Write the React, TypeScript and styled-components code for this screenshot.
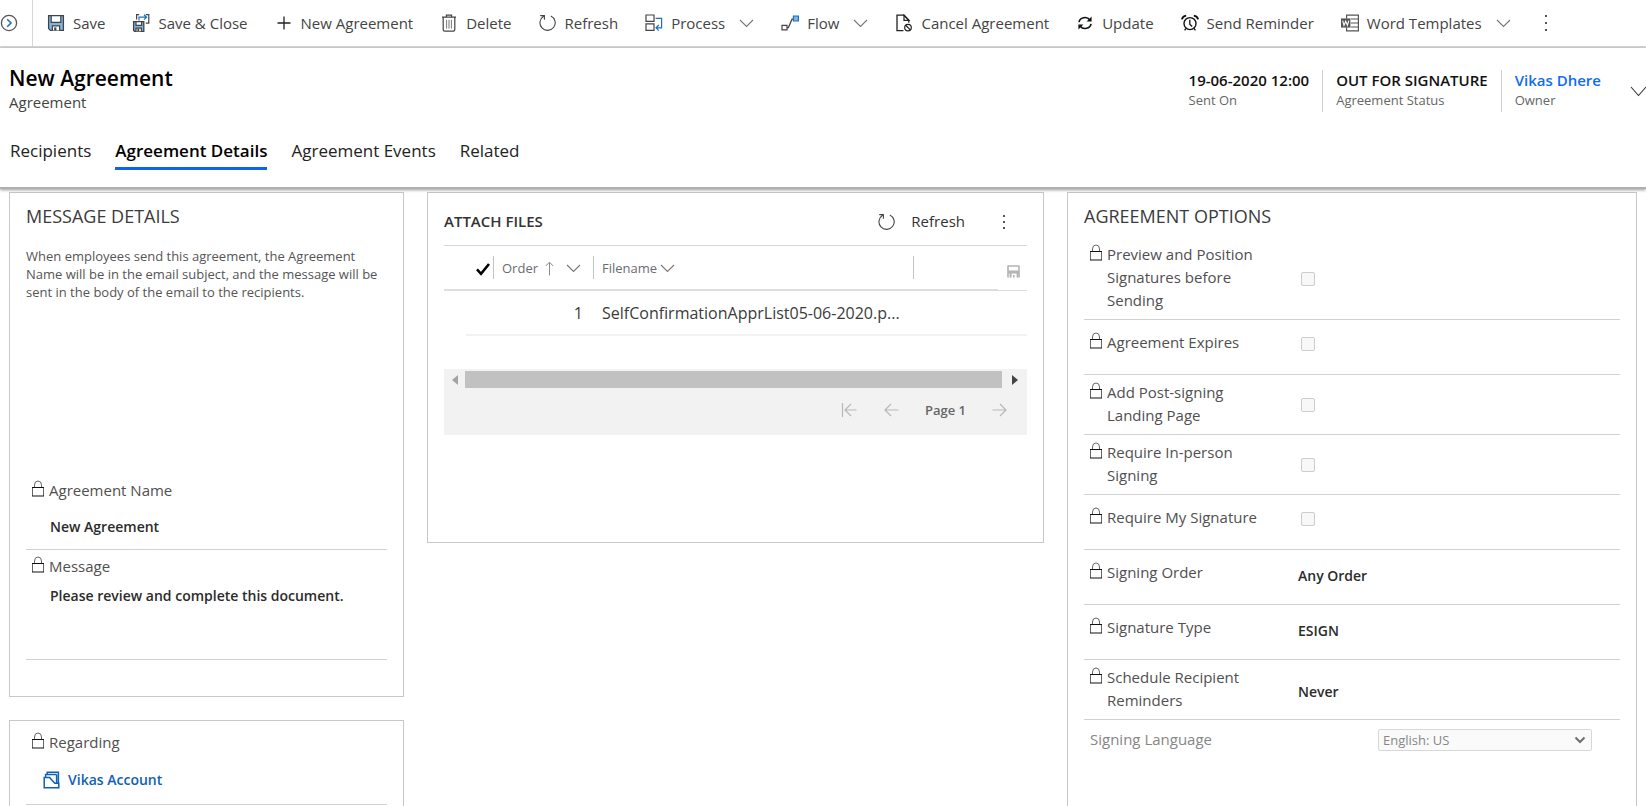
import React from "react";
import styled, { createGlobalStyle, css } from "styled-components";

const GlobalStyle = createGlobalStyle`
  *, *::before, *::after { box-sizing: border-box; }
  body {
    margin: 0;
    background: #fff;
    color: #333;
    font-family: "Segoe UI", "Open Sans", "Noto Sans", sans-serif;
    font-size: 15px;
    line-height: 23px;
  }
  button, input, textarea, select { font: inherit; color: inherit; }
  h1, h2, p, dl, dd { margin: 0; font-weight: 400; }
`;

const Shell = styled.div`
  display: flex;
  flex-direction: column;
  height: 100vh;
  overflow: hidden;
`;

/* ---------- command bar ---------- */

const CommandBar = styled.nav`
  display: flex;
  flex: none;
  align-items: stretch;
  height: 48px;
  border-bottom: 2px solid #d6d6d6;
`;

const BackButton = styled.button`
  display: flex;
  align-items: center;
  width: 33px;
  padding: 0;
  border: 0;
  border-right: 1px solid #d6d6d6;
  background: none;
`;

const Commands = styled.div`
  display: flex;
  align-items: center;
`;

const Command = styled.button`
  display: flex;
  align-items: center;
  gap: 8px;
  height: 46px;
  padding: 0 13px 0 14px;
  border: 0;
  background: none;
  color: #444;
  white-space: nowrap;
  cursor: pointer;
`;

const MenuChevron = styled.span`
  display: flex;
  padding-left: 6px;
`;

/* ---------- record header ---------- */

const RecordHeader = styled.header`
  position: relative;
  z-index: 1;
  flex: none;
  padding: 16px 0 17px 9px;
  border-bottom: 2px solid #b0b0b0;
  background: #fff;
  box-shadow: 0 1px 3px rgba(0, 0, 0, 0.4);
`;

const TitleRow = styled.div`
  display: flex;
  justify-content: space-between;
`;

const Title = styled.h1`
  color: #000;
  font-size: 21px;
  font-weight: 600;
  line-height: 28px;
`;

const Subtitle = styled.p`
  color: #444;
  line-height: 20px;
`;

const Summary = styled.div`
  display: flex;
  align-items: center;
  padding-top: 6px;
`;

const SummaryFields = styled.dl`
  display: flex;
`;

const SummaryField = styled.div`
  display: flex;
  flex-direction: column-reverse;
  justify-content: flex-end;
  height: 42px;
  padding: 0 13px;
  border-left: 1px solid #d0d0d0;
  white-space: nowrap;

  &:first-child { border-left: 0; }

  dt { color: #666; font-size: 13px; line-height: 20px; }
  dd { color: #111; font-size: 15px; font-weight: 600; line-height: 20px; }
`;

const OwnerLink = styled.a`
  color: #0f6cf5;
  text-decoration: none;
`;

const ExpandButton = styled.button`
  display: flex;
  width: 32px;
  padding: 0 0 0 16px;
  border: 0;
  background: none;
  overflow: hidden;
`;

const Tabs = styled.div`
  display: flex;
  gap: 24px;
  padding: 27px 0 0 1px;
`;

const Tab = styled.button<{ $active?: boolean }>`
  padding: 0 0 4px;
  border: 0;
  border-bottom: 3px solid ${(p) => (p.$active ? "#0a66f0" : "transparent")};
  background: none;
  color: ${(p) => (p.$active ? "#000" : "#222")};
  font-size: 17px;
  font-weight: ${(p) => (p.$active ? 600 : 400)};
  line-height: 24px;
  cursor: pointer;
`;

/* ---------- form body ---------- */

const FormBody = styled.main`
  display: grid;
  flex: 1;
  grid-template-columns: 395fr 617fr 570fr;
  gap: 23px;
  align-items: start;
  min-height: 0;
  padding: 3px 9px 0;
  overflow-y: auto;
  scrollbar-width: none;
`;

const Column = styled.div`
  display: flex;
  flex-direction: column;
  gap: 23px;
  min-width: 0;
`;

const Card = styled.section<{ $bottom?: number }>`
  padding: 0 16px ${(p) => p.$bottom ?? 0}px;
  border: 1px solid #c8c8c8;
  background: #fff;
`;

const SectionTitle = styled.h2`
  padding-top: 11px;
  color: #3b3b3b;
  font-size: 18px;
  line-height: 24px;
`;

const HelpText = styled.p`
  min-height: 232px;
  padding-top: 19px;
  color: #555;
  font-size: 13px;
  line-height: 18px;
`;

const StackedField = styled.div<{ $top: number; $gap: number; $bottom: number }>`
  display: flex;
  flex-direction: column;
  gap: ${(p) => p.$gap}px;
  padding: ${(p) => `${p.$top}px 0 ${p.$bottom}px 5px`};
  border-bottom: 1px solid #d2d2d2;
`;

const FieldLabel = styled.label`
  display: flex;
  align-items: flex-start;
  gap: 4px;
  color: #505050;

  svg { margin-top: 1px; }
`;

const plainBox = css`
  display: block;
  width: 100%;
  padding: 0;
  border: 0;
  outline: 0;
  background: none;
  color: #2b2b2b;
  font-size: 14px;
  font-weight: 600;
  line-height: 23px;
`;

const TextValue = styled.input`
  ${plainBox}
  height: 23px;
`;

const StackedInput = styled(TextValue)`
  padding-left: 19px;
`;

const StackedTextArea = styled.textarea`
  ${plainBox}
  height: 64px;
  padding-left: 19px;
  resize: none;
`;

const RecordLink = styled.a`
  display: flex;
  align-items: center;
  gap: 8px;
  padding-left: 12px;
  color: #1160b7;
  font-size: 14px;
  font-weight: 600;
  text-decoration: none;
`;

/* ---------- attached files grid ---------- */

const GridToolbar = styled.div`
  display: flex;
  align-items: center;
  height: 53px;
  padding-top: 5px;
  border-bottom: 1px solid #d6d6d6;
`;

const GridTitle = styled.h2`
  flex: 1;
  color: #333;
  font-size: 15px;
  font-weight: 600;
`;

const GridButton = styled.button`
  display: flex;
  align-items: center;
  gap: 15px;
  padding: 0;
  border: 0;
  background: none;
`;

const MoreButton = styled(GridButton)`
  justify-content: center;
  width: 47px;
  margin-left: 15px;
`;

const FileTable = styled.table`
  width: 100%;
  margin-bottom: 33px;
  border-spacing: 0;
  table-layout: fixed;

  th, td { padding: 0; text-align: left; font-weight: 400; }
  th { height: 45px; border-bottom: 2px solid #dedede; }
  th:last-child { border-bottom: 1px solid #dedede; }
  td { height: 45px; border-bottom: 2px solid #f2f2f2; }
  td:first-child { border-bottom: 0; }
`;

const SizedCol = styled.col<{ $width: number }>`
  width: ${(p) => p.$width}px;
`;

const HeadCell = styled.div<{ $divided?: boolean }>`
  display: flex;
  align-items: center;
  height: 23px;
  padding-top: 2px;
  padding-left: ${(p) => (p.$divided ? 8 : 10)}px;
  border-left: ${(p) => (p.$divided ? "1px solid #c4c4c4" : "0")};
  color: #6b6b72;
  font-size: 13px;
  white-space: nowrap;
`;

const SortMark = styled.span`
  display: flex;
  padding: 0 11px 0 6px;
`;

const SaveMark = styled.span`
  display: flex;
  padding: 6px 0 0 9px;
`;

const CellText = styled.div<{ $right?: boolean }>`
  padding: 2px 10px 0 9px;
  color: #3b3b3b;
  font-size: 16px;
  text-align: ${(p) => (p.$right ? "right" : "left")};
  white-space: nowrap;
`;

const GridFooter = styled.div`
  height: 66px;
  background: #f2f2f2;
`;

const ScrollTrack = styled.div`
  display: flex;
  align-items: center;
  padding-top: 2px;
`;

const ScrollArrow = styled.button<{ $wide?: boolean }>`
  display: flex;
  justify-content: center;
  width: ${(p) => (p.$wide ? 25 : 21)}px;
  padding: 0;
  border: 0;
  background: none;
`;

const ScrollThumb = styled.div`
  flex: 1;
  height: 17px;
  background: #c1c1c1;
`;

const Pager = styled.div`
  display: flex;
  align-items: center;
  justify-content: flex-end;
  gap: 26px;
  height: 44px;
  padding-right: 19px;
  color: #666;
  font-size: 13px;
  font-weight: 600;
`;

const PagerButton = styled.button`
  display: flex;
  padding: 0;
  border: 0;
  background: none;
`;

/* ---------- option rows ---------- */

const OptionList = styled.div`
  padding-top: 9px;
`;

const OptionRow = styled.div<{ $tall?: boolean }>`
  display: grid;
  grid-template-columns: 186px 1fr;
  column-gap: 28px;
  align-items: center;
  padding: ${(p) => (p.$tall ? "6px 0 7px" : "11px 0 20px")};
  border-bottom: 1px solid #d2d2d2;
`;

const OptionLabel = styled(FieldLabel)`
  padding-left: 5px;
`;

const CheckBox = styled.input`
  appearance: none;
  width: 14px;
  height: 14px;
  margin: 2px 0 0 3px;
  border: 1px solid #cdcdcd;
  border-radius: 2px;
  background: #f8f8f8;
`;

const OptionValue = styled(TextValue)`
  margin-top: 5px;
`;

const ValueSlot = styled.div`
  display: flex;
  align-items: center;
  height: 23px;
`;

const LanguageRow = styled.div`
  display: grid;
  grid-template-columns: 288px 1fr;
  align-items: center;
  padding: 8px 28px 0 6px;
  color: #868686;
`;

const SelectBox = styled.div`
  position: relative;
  display: flex;
  height: 22px;

  svg { position: absolute; top: 7px; right: 6px; pointer-events: none; }
`;

const Select = styled.select`
  appearance: none;
  width: 100%;
  padding: 0 4px;
  border: 1px solid #d8d8d8;
  border-radius: 2px;
  background: #fafafa;
  color: #868686;
  font-size: 13px;
  line-height: 20px;
  opacity: 1;
`;

/* ---------- icons ---------- */

const IconSvg = styled.svg`
  flex: none;
`;

type IconProps = { children: React.ReactNode; w?: number; h?: number; color?: string };

const Icon = ({ children, w = 18, h = 18, color = "#444" }: IconProps) => (
  <IconSvg width={w} height={h} viewBox={`0 0 ${w} ${h}`} fill="none" stroke={color} strokeWidth="1.2" aria-hidden="true">
    {children}
  </IconSvg>
);

const Lock = () => (
  <Icon w={14} h={17}>
    <path d="M3.5 7.5V5a3.5 4 0 0 1 7 0v2.500M1.500 7v9M12.500 7v9" stroke="#666" strokeWidth="1" />
    <path d="M1 7.500h12M1 16h12" stroke="#111" />
  </Icon>
);

const Chevron = ({ color = "#777", w = 15, h = 9 }: { color?: string; w?: number; h?: number }) => (
  <Icon w={w} h={h} color={color}>
    <path d={`M1 1l${w / 2 - 1} ${h - 2.5}L${w - 1} 1`} strokeWidth="1.1" />
  </Icon>
);

const Refresh = () => (
  <Icon>
    <path d="M11.8 1.9a7.6 7.6 0 1 1-7.2.4M1.200 1.600h4.200v4.200" strokeWidth="1.1" />
  </Icon>
);

const Dots = ({ gap = 6 }: { gap?: number }) => (
  <Icon w={4}>
    {[-gap, 0, gap].map((d) => (
      <rect key={d} x="1" y={8 + d} width="2" height="2" fill="#555" stroke="none" />
    ))}
  </Icon>
);

const icons = {
  back: (
    <Icon>
      <circle cx="9" cy="9" r="7.6" stroke="#555" strokeWidth="1.3" />
      <path d="M7.2 5.2L11 9l-3.8 3.8" stroke="#1d6fc0" strokeWidth="1.6" />
    </Icon>
  ),
  save: (
    <Icon>
      <path d="M1.6 1.6h14.8v14.8H3.4l-1.8-1.8z" fill="#7eb6e4" strokeWidth="1.3" />
      <path d="M4.2 1.6h9.6v6.8H4.2z" fill="#fff" />
      <path d="M5.4 16.4v-4.6h7.2v4.6" fill="#fff" />
      <path d="M7.2 13.4h2.2v3H7.2z" fill="#444" stroke="none" />
    </Icon>
  ),
  saveClose: (
    <Icon>
      <path d="M1.6 7.6h10.2v9.8H2.6l-1-1z" fill="#7eb6e4" strokeWidth="1.3" />
      <path d="M4 7.6h5.6v3.8H4z" fill="#fff" />
      <path d="M4 17.2v-3h5.4v3" fill="#fff" />
      <path d="M5.4 15h1.8v2H5.4z" fill="#444" stroke="none" />
      <path d="M4.6 5.6v-5h2.6M13.8.6h3v8.6h-3" />
      <path d="M7 6.4V3.2h7.4M12 .8l2.6 2.4L12 5.6" stroke="#1d6fc0" />
    </Icon>
  ),
  add: (
    <Icon color="#222">
      <path d="M9 2.5v13M2.5 9h13" strokeWidth="1.3" />
    </Icon>
  ),
  remove: (
    <Icon>
      <path d="M2 3.2h14M6.4 3V1.2h5.2V3M3.2 3.4v12.2q0 1.6 1.6 1.6h8.4q1.6 0 1.6-1.6V3.4" />
      <path d="M6.6 5.8v8.8M9 5.8v8.8M11.4 5.8v8.8" strokeWidth="1" stroke="#777" />
    </Icon>
  ),
  process: (
    <Icon>
      <path d="M1 1h8v6.4H1zM1 9.8h8v6.6H1z" />
      <path d="M10.6 4.4h6v9.4h-5M13.8 11L11 13.8l2.8 2.8" stroke="#1d6fc0" />
    </Icon>
  ),
  flow: (
    <Icon>
      <path d="M1 11.4h5v4.4H1zM6 13.6h1.4l3.6-8.4h1" />
      <path d="M12.4 2h5v5h-5z" fill="#7eb6e4" stroke="#1d6fc0" />
    </Icon>
  ),
  cancel: (
    <Icon color="#222">
      <path d="M8.4 16.6H2V1.2h7l4.8 5v2.6" strokeWidth="1.3" />
      <path d="M9 1.2v5.2h5z" />
      <circle cx="13" cy="13.6" r="3.3" />
      <path d="M10.7 11.3l4.6 4.6" strokeWidth="1.3" />
    </Icon>
  ),
  update: (
    <Icon color="#111">
      <path d="M3 8.2a6 5.4 0 0 1 10.8-2.4M15 9.8a6 5.4 0 0 1-10.8 2.4" strokeWidth="1.6" />
      <path d="M15.6 2.6v5h-5zM2.4 15.4v-5h5z" fill="#111" stroke="none" />
    </Icon>
  ),
  reminder: (
    <Icon color="#111">
      <circle cx="9" cy="9.6" r="6" strokeWidth="1.4" />
      <path d="M8.8 5.8v4.4l2.4 2.2M5 14.4l-1.4 2M13 14.4l1.4 2" strokeWidth="1.3" />
      <path d="M.9 5.4C1.4 3 3 1.8 5.2 1.6M17.1 5.4C16.6 3 15 1.8 12.8 1.6" strokeWidth="1.9" />
    </Icon>
  ),
  word: (
    <Icon color="#555">
      <path d="M5.6 4.6V1.2h11.8v15.6H5.6v-3.2M9.8 5h7.6M9.8 9h7.6M9.8 13h7.6" />
      <path d="M0 4.4h9.4v9.2H0z" fill="#555" stroke="none" />
      <path d="M1.6 6.6L3 11.4l1.7-4.2 1.7 4.2 1.4-4.8" stroke="#fff" strokeWidth="1.1" />
    </Icon>
  ),
  record: (
    <Icon w={17} color="#1160b7">
      <path d="M1.2 6.4v10.4h14.6v-4.6h-4L6.6 6.4zM2.6 6V3.6h11M4.2 3.4V1.2h11.2v10.6M13.6 3.6v8.2" strokeWidth="1.5" />
    </Icon>
  ),
};

type CommandDef = { icon: React.ReactNode; label: string; menu?: boolean };

const commands: CommandDef[] = [
  { icon: icons.save, label: "Save" },
  { icon: icons.saveClose, label: "Save & Close" },
  { icon: icons.add, label: "New Agreement" },
  { icon: icons.remove, label: "Delete" },
  { icon: <Refresh />, label: "Refresh" },
  { icon: icons.process, label: "Process", menu: true },
  { icon: icons.flow, label: "Flow", menu: true },
  { icon: icons.cancel, label: "Cancel Agreement" },
  { icon: icons.update, label: "Update" },
  { icon: icons.reminder, label: "Send Reminder" },
  { icon: icons.word, label: "Word Templates", menu: true },
];

const tabs = ["Recipients", "Agreement Details", "Agreement Events", "Related"];

type Option = { id: string; label: string; value?: string; tall?: boolean };

const options: Option[] = [
  { id: "preview", label: "Preview and Position Signatures before Sending", tall: true },
  { id: "expires", label: "Agreement Expires" },
  { id: "landing", label: "Add Post-signing Landing Page", tall: true },
  { id: "in-person", label: "Require In-person Signing", tall: true },
  { id: "my-signature", label: "Require My Signature" },
  { id: "order", label: "Signing Order", value: "Any Order" },
  { id: "type", label: "Signature Type", value: "ESIGN" },
  { id: "reminders", label: "Schedule Recipient Reminders", value: "Never", tall: true },
];

export default function App() {
  return (
    <Shell>
      <GlobalStyle />
      <CommandBar aria-label="Commands">
        <BackButton aria-label="Expand">{icons.back}</BackButton>
        <Commands>
          {commands.map((c) => (
            <Command key={c.label}>
              {c.icon}
              {c.label}
              {c.menu && (
                <MenuChevron>
                  <Chevron />
                </MenuChevron>
              )}
            </Command>
          ))}
          <Command aria-label="More commands">
            <MenuChevron>
              <Dots gap={7} />
            </MenuChevron>
          </Command>
        </Commands>
      </CommandBar>

      <RecordHeader>
        <TitleRow>
          <div>
            <Title>New Agreement</Title>
            <Subtitle>Agreement</Subtitle>
          </div>
          <Summary>
            <SummaryFields>
              <SummaryField>
                <dt>Sent On</dt>
                <dd>19-06-2020 12:00</dd>
              </SummaryField>
              <SummaryField>
                <dt>Agreement Status</dt>
                <dd>OUT FOR SIGNATURE</dd>
              </SummaryField>
              <SummaryField>
                <dt>Owner</dt>
                <dd>
                  <OwnerLink href="#owner">Vikas Dhere</OwnerLink>
                </dd>
              </SummaryField>
            </SummaryFields>
            <ExpandButton aria-label="Expand header">
              <Chevron color="#333" w={17} h={11} />
            </ExpandButton>
          </Summary>
        </TitleRow>
        <Tabs role="tablist">
          {tabs.map((t) => (
            <Tab key={t} role="tab" aria-selected={t === "Agreement Details"} $active={t === "Agreement Details"}>
              {t}
            </Tab>
          ))}
        </Tabs>
      </RecordHeader>

      <FormBody>
        <Column>
          <Card $bottom={36}>
            <SectionTitle>MESSAGE DETAILS</SectionTitle>
            <HelpText>
              When employees send this agreement, the Agreement Name will be in the email subject, and the message will be
              sent in the body of the email to the recipients.
            </HelpText>
            <StackedField $top={19} $gap={13} $bottom={11}>
              <FieldLabel htmlFor="agreement-name">
                <Lock />
                Agreement Name
              </FieldLabel>
              <StackedInput id="agreement-name" readOnly defaultValue="New Agreement" />
            </StackedField>
            <StackedField $top={5} $gap={6} $bottom={11}>
              <FieldLabel htmlFor="message">
                <Lock />
                Message
              </FieldLabel>
              <StackedTextArea id="message" readOnly defaultValue="Please review and complete this document." />
            </StackedField>
          </Card>
          <Card $bottom={60}>
            <StackedField $top={10} $gap={14} $bottom={13}>
              <FieldLabel as="div">
                <Lock />
                Regarding
              </FieldLabel>
              <RecordLink href="#account">
                {icons.record}
                Vikas Account
              </RecordLink>
            </StackedField>
          </Card>
        </Column>

        <Card $bottom={107}>
          <GridToolbar>
            <GridTitle>ATTACH FILES</GridTitle>
            <GridButton>
              <Refresh />
              Refresh
            </GridButton>
            <MoreButton aria-label="More actions">
              <Dots />
            </MoreButton>
          </GridToolbar>
          <FileTable>
            <colgroup>
              <SizedCol $width={22} />
              <SizedCol $width={27} />
              <SizedCol $width={100} />
              <col />
              <SizedCol $width={85} />
              <SizedCol $width={29} />
            </colgroup>
            <thead>
              <tr>
                <th />
                <th aria-label="Selected">
                  <HeadCell>
                    <Icon w={14} h={14} color="#000">
                      <path d="M1 7.4l4 4.4L13 2" strokeWidth="2.6" />
                    </Icon>
                  </HeadCell>
                </th>
                <th>
                  <HeadCell $divided>
                    Order
                    <SortMark>
                      <Icon w={11} h={15} color="#8a8a90">
                        <path d="M5.5 14.5v-13M1.8 5l3.7-3.8L9.2 5" strokeWidth="1" />
                      </Icon>
                    </SortMark>
                    <Chevron />
                  </HeadCell>
                </th>
                <th>
                  <HeadCell $divided>
                    Filename&nbsp;
                    <Chevron />
                  </HeadCell>
                </th>
                <th>
                  <HeadCell $divided />
                </th>
                <th aria-label="Save rows">
                  <SaveMark>
                    <Icon w={13} h={13} color="#b4b4b4">
                      <path d="M1 .5v12M12 .5v12M1 1h11" strokeWidth="1.6" />
                      <path d="M1 5.6h11v3H1zM2.6 8.4h2v4h-2zM6 10h1.6v2.4H6zM9.6 8.4h1.8v4H9.6z" fill="#b4b4b4" stroke="none" />
                    </Icon>
                  </SaveMark>
                </th>
              </tr>
            </thead>
            <tbody>
              <tr>
                <td />
                <td />
                <td>
                  <CellText $right>1</CellText>
                </td>
                <td>
                  <CellText>SelfConfirmationApprList05-06-2020.p...</CellText>
                </td>
                <td />
                <td />
              </tr>
            </tbody>
          </FileTable>
          <GridFooter>
            <ScrollTrack>
              <ScrollArrow aria-label="Scroll left">
                <Icon w={6} h={10}>
                  <path d="M6 0v10L0 5z" fill="#a3a3a3" stroke="none" />
                </Icon>
              </ScrollArrow>
              <ScrollThumb />
              <ScrollArrow $wide aria-label="Scroll right">
                <Icon w={6} h={10}>
                  <path d="M0 0v10l6-5z" fill="#444" stroke="none" />
                </Icon>
              </ScrollArrow>
            </ScrollTrack>
            <Pager>
              <PagerButton aria-label="First page">
                <Icon w={16} h={16} color="#b8b8b8">
                  <path d="M1.5 1v14M15.5 8H4M10 2L4 8l6 6" />
                </Icon>
              </PagerButton>
              <PagerButton aria-label="Previous page">
                <Icon w={16} h={16} color="#b8b8b8">
                  <path d="M15.5 8H2M8 2L2 8l6 6" />
                </Icon>
              </PagerButton>
              Page 1
              <PagerButton aria-label="Next page">
                <Icon w={16} h={16} color="#b8b8b8">
                  <path d="M.5 8H14M8 2l6 6-6 6" />
                </Icon>
              </PagerButton>
            </Pager>
          </GridFooter>
        </Card>

        <Card $bottom={100}>
          <SectionTitle>AGREEMENT OPTIONS</SectionTitle>
          <OptionList>
            {options.map((o) => (
              <OptionRow key={o.id} $tall={o.tall}>
                <OptionLabel htmlFor={o.id}>
                  <Lock />
                  <span>{o.label}</span>
                </OptionLabel>
                <ValueSlot>
                  {o.value ? <OptionValue id={o.id} readOnly defaultValue={o.value} /> : <CheckBox id={o.id} type="checkbox" disabled />}
                </ValueSlot>
              </OptionRow>
            ))}
          </OptionList>
          <LanguageRow>
            <label htmlFor="language">Signing Language</label>
            <SelectBox>
              <Select id="language" disabled defaultValue="en-US">
                <option value="en-US">English: US</option>
              </Select>
              <Icon w={12} h={8} color="#6e6e6e">
                <path d="M1.5 1.5L6 6l4.5-4.5" strokeWidth="2" />
              </Icon>
            </SelectBox>
          </LanguageRow>
        </Card>
      </FormBody>
    </Shell>
  );
}
